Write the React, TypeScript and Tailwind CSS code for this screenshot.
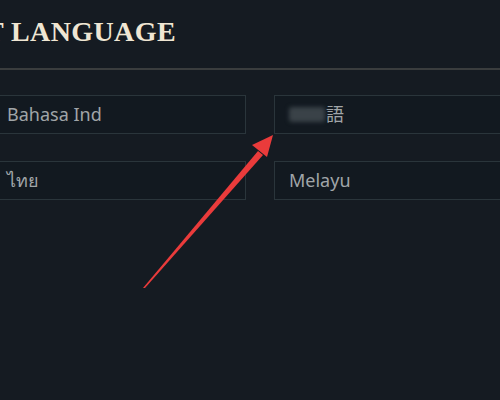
import React from 'react';

const languages = [
  { id: 'id', label: 'Bahasa Ind' },
  { id: 'ja', label: '語', blurred: true },
  { id: 'th', label: 'ไทย' },
  { id: 'ms', label: 'Melayu' },
];

const Arrow = () => (
  <svg className="absolute left-0 top-0" width="500" height="400" viewBox="0 0 500 400">
    <path d="M143 288 L258 151 L263 155 L145 288 Z" fill="#ea3b3b" />
    <path d="M273 135 L252 145 L267 157 Z" fill="#ea3b3b" />
  </svg>
);

export default function App() {
  return (
    <div
      className="relative w-[500px] h-[400px] overflow-hidden bg-[#151b22]"
      style={{ fontFamily: '"Noto Sans", "Noto Sans CJK JP", sans-serif' }}
    >
      <div className="pt-[18px] ml-[-15px] h-[68px]">
        <h1
          className="text-[28px] leading-none font-bold text-[#efe6d3] tracking-[0.4px] whitespace-nowrap"
          style={{ fontFamily: '"Liberation Serif", serif' }}
        >
          T LANGUAGE
        </h1>
      </div>
      <div className="h-[2px] bg-[#3a3d3e]" />

      <div className="ml-[-20px] w-[560px] mt-[25px] grid grid-cols-2 gap-x-[28px] gap-y-[27px]">
        {languages.map((lang) => (
          <div
            key={lang.id}
            className="h-[39px] border border-[#2a353b] bg-[#121920] flex items-center pl-[26px] text-[18px] text-[#a0a5a8]"
            style={lang.id === 'ja' || lang.id === 'ms' ? { paddingLeft: 14 } : undefined}
          >
            {lang.blurred && (
              <span className="inline-block w-[36px] h-[15px] mr-[1px] rounded-[3px] bg-[#3a4248] blur-[2px]" />
            )}
            <span>{lang.label}</span>
          </div>
        ))}
      </div>

      <Arrow />
    </div>
  );
}
